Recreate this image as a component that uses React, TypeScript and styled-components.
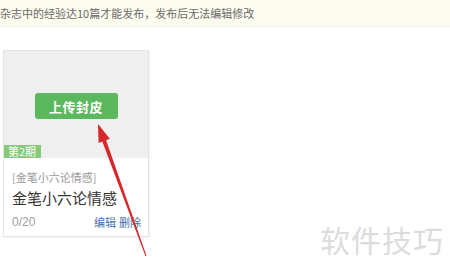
import styled, { createGlobalStyle } from 'styled-components'

const GlobalStyle = createGlobalStyle`
    html, body {
        margin: 0;
        padding: 0;
        background: #ffffff;
    }
    body {
        font-family: "Noto Sans CJK SC", "Liberation Sans", sans-serif;
    }
`

export default function App() {
    return (
        <Page>
            <GlobalStyle />
            <Notice>杂志中的经验达10篇才能发布，发布后无法编辑修改</Notice>

            <Content>
                <Card>
                    <Cover>
                        <UploadButton>上传封皮</UploadButton>
                        <IssueBadge>第2期</IssueBadge>
                    </Cover>
                    <CardBody>
                        <Category>[金笔小六论情感]</Category>
                        <CardTitle>金笔小六论情感</CardTitle>
                        <CardFooter>
                            <Count>0/20</Count>
                            <Actions>
                                <ActionLink>编辑</ActionLink>
                                <ActionLink>删除</ActionLink>
                            </Actions>
                        </CardFooter>
                    </CardBody>
                </Card>
            </Content>

            {/* red annotation arrow pointing at the upload button */}
            <ArrowLayer width="450" height="276" viewBox="0 0 450 276">
                <polygon
                    points="98,124 109.8,138.8 106.1,140.2 146.5,255.8 145.5,256.2 102.3,141.6 98.6,142.9"
                    fill="#d6282b"
                />
            </ArrowLayer>

            <Watermark>软件技巧</Watermark>
        </Page>
    )
}

const Page = styled.div`
    position: relative;
    width: 450px;
    height: 276px;
    overflow: hidden;
    background: #ffffff;
`

const Notice = styled.div`
    height: 26px;
    line-height: 26px;
    padding-left: 0;
    background: #fbfbee;
    border-bottom: 1px solid #f0f0e4;
    font-size: 11px;
    color: #6a6a6a;
    white-space: nowrap;
`

const Content = styled.div`
    padding: 23px 0 0 3px;
`

const Card = styled.div`
    width: 144px;
    border: 1px solid #e4e4e4;
    box-shadow: 1px 1px 2px rgba(0, 0, 0, 0.06);
    background: #ffffff;
`

const Cover = styled.div`
    position: relative;
    height: 107px;
    background: #efefef;
    display: flex;
    align-items: center;
    justify-content: center;
`

const UploadButton = styled.button`
    width: 83px;
    height: 26px;
    margin-top: 3px;
    border: none;
    border-radius: 3px;
    background: #5cb85c;
    color: #ffffff;
    font-family: "Noto Sans CJK SC", sans-serif;
    font-size: 13px;
    font-weight: 700;
    letter-spacing: 0.5px;
    padding: 0;
`

const IssueBadge = styled.span`
    position: absolute;
    left: 0;
    bottom: 0;
    padding: 0 5px 0 4px;
    height: 13px;
    line-height: 13px;
    background: #86c97a;
    color: #ffffff;
    font-size: 11px;
`

const CardBody = styled.div`
    display: flex;
    flex-direction: column;
    padding: 12px 7px 6px 8px;
`

const Category = styled.div`
    font-size: 11px;
    line-height: 14px;
    color: #9a9a9a;
`

const CardTitle = styled.div`
    margin-top: 4px;
    font-size: 15px;
    line-height: 20px;
    color: #333333;
`

const CardFooter = styled.div`
    margin-top: 6px;
    display: flex;
    align-items: center;
    justify-content: space-between;
`

const Count = styled.span`
    font-family: "Liberation Sans", sans-serif;
    font-size: 12px;
    color: #a0a0a0;
`

const Actions = styled.div`
    display: flex;
    gap: 3px;
`

const ActionLink = styled.span`
    font-size: 11px;
    color: #3f72ad;
`

const ArrowLayer = styled.svg`
    position: absolute;
    left: 0;
    top: 0;
    pointer-events: none;
`

const Watermark = styled.div`
    position: absolute;
    left: 320px;
    top: 221px;
    font-size: 30px;
    line-height: 36px;
    color: #dcdcdc;
    letter-spacing: 1px;
    white-space: nowrap;
`
